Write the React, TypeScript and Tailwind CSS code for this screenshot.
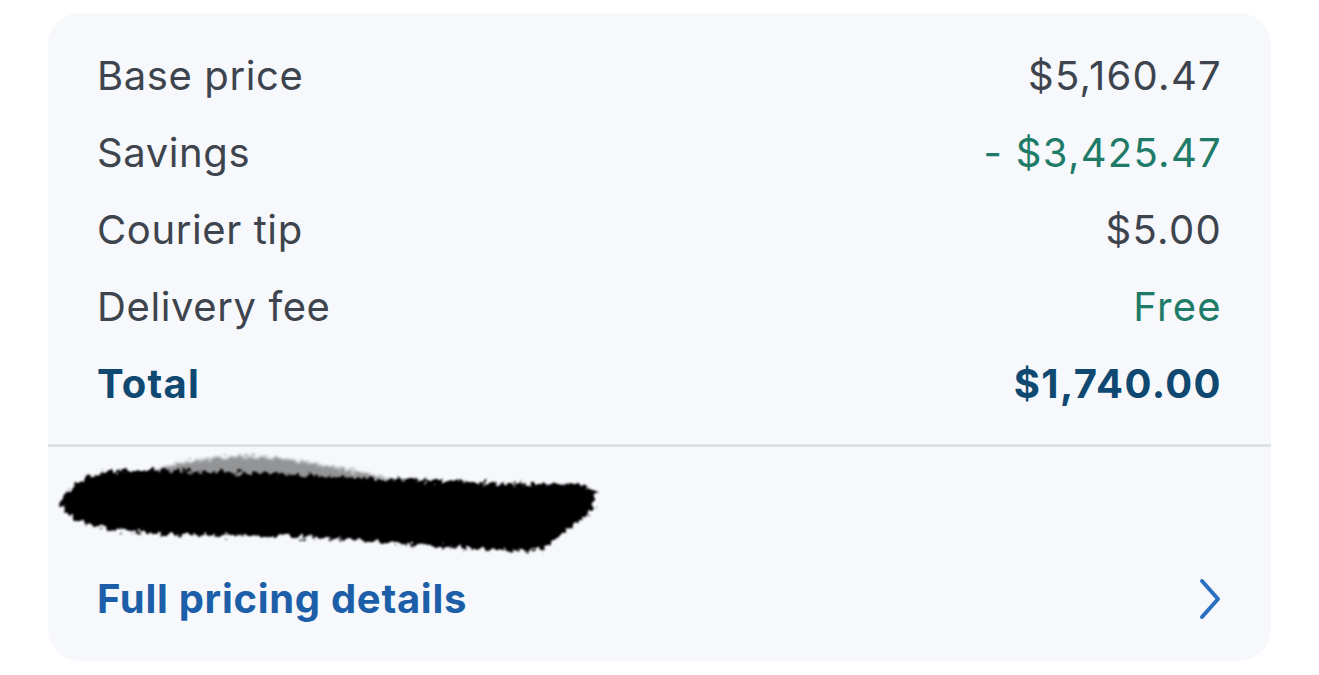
import React from "react";

const rows = [
  { label: "Base price", value: "$5,160.47", valueClass: "text-[#3d444e]" },
  { label: "Savings", value: "- $3,425.47", valueClass: "text-[#1e7b68]" },
  { label: "Courier tip", value: "$5.00", valueClass: "text-[#3d444e]" },
  { label: "Delivery fee", value: "Free", valueClass: "text-[#1e7b68]" },
];

function Redaction() {
  return (
    <svg width="560" height="112" viewBox="0 0 560 112" className="ml-[4px] mt-[3px] block">
      <defs>
        <filter id="rough" x="-10%" y="-30%" width="120%" height="160%">
          <feTurbulence type="fractalNoise" baseFrequency="0.18" numOctaves="3" seed="4" result="n" />
          <feDisplacementMap in="SourceGraphic" in2="n" scale="12" xChannelSelector="R" yChannelSelector="G" result="d" />
          <feGaussianBlur in="d" stdDeviation="1.2" />
        </filter>
        <filter id="rough2" x="-10%" y="-50%" width="120%" height="200%">
          <feTurbulence type="fractalNoise" baseFrequency="0.3" numOctaves="2" seed="9" result="n" />
          <feDisplacementMap in="SourceGraphic" in2="n" scale="12" xChannelSelector="R" yChannelSelector="G" result="d" />
          <feGaussianBlur in="d" stdDeviation="1.5" />
        </filter>
      </defs>
      <path
        d="M95 24 C 130 8, 190 2, 240 10 C 290 18, 320 24, 340 30 C 280 34, 180 34, 95 30 Z"
        fill="#000"
        opacity="0.4"
        filter="url(#rough2)"
      />
      <path
        d="M10 50 C 14 36, 36 24, 60 21 C 100 18, 130 22, 170 22 C 230 24, 300 28, 360 30 C 420 32, 480 34, 530 35 C 545 38, 548 58, 530 70 C 512 78, 500 96, 488 100 C 440 102, 380 96, 320 91 C 260 86, 200 86, 140 85 C 90 84, 50 80, 26 70 C 12 64, 8 56, 10 50 Z"
        fill="#000"
        filter="url(#rough)"
      />
    </svg>
  );
}

export default function App() {
  return (
    <div
      className="w-full h-[675px] bg-white pt-[13px] pl-[48px]"
      style={{ fontFamily: "Inter, 'Noto Sans', sans-serif" }}
    >
      <div className="w-[1223px] h-[648px] rounded-[32px] bg-[#f6f8fb] flex flex-col overflow-hidden">
        <div className="pt-[24px] pb-[22px] px-[49px] flex flex-col">
          {rows.map((r) => (
            <div key={r.label} className="flex justify-between items-center h-[77px] text-[40px] leading-[77px] text-[#3d444e]">
              <span className="tracking-[0.6px]">{r.label}</span>
              <span className={`tracking-[1.3px] ${r.valueClass}`}>{r.value}</span>
            </div>
          ))}
          <div className="flex justify-between items-center h-[77px] text-[40px] leading-[77px] font-bold text-[#0f4870]">
            <span className="tracking-[1.2px]">Total</span>
            <span className="tracking-[1.4px]">$1,740.00</span>
          </div>
        </div>
        <div className="h-[3px] bg-[#dde1e5]" />
        <Redaction />
        <div className="mt-[13px] h-[48px] pl-[49px] pr-[48px] flex items-center justify-between">
          <span className="text-[40px] leading-[48px] font-bold tracking-[0.7px] text-[#1c5fa8]">Full pricing details</span>
          <svg width="26" height="44" viewBox="0 0 26 44" fill="none">
            <path d="M5 4 L21 22 L5 40" stroke="#2b6fc0" strokeWidth="4" strokeLinecap="round" strokeLinejoin="round" />
          </svg>
        </div>
      </div>
    </div>
  );
}
